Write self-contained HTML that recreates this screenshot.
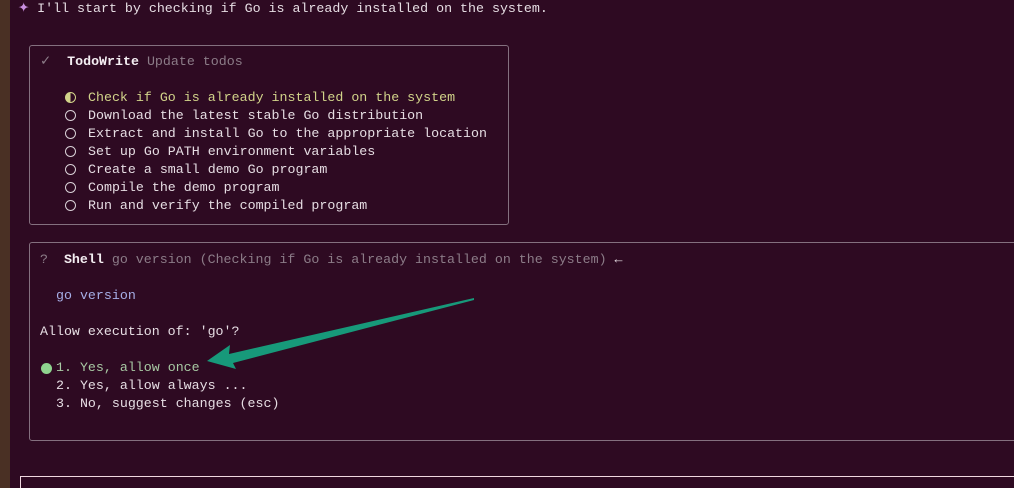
<!DOCTYPE html>
<html><head><meta charset="utf-8"><style>
html,body{margin:0;padding:0;}
body{width:1014px;height:488px;overflow:hidden;background:#2e0a22;position:relative;font-family:"Liberation Mono",monospace;font-size:13.3px;color:#e6dde3;}
.strip{position:absolute;left:0;top:0;width:10px;height:488px;background:#4a3024;}
.t{position:absolute;white-space:pre;line-height:18px;}
.box{position:absolute;border:1px solid #84707f;border-radius:3px;box-sizing:border-box;}
.g{color:#8c7c88;}
.b{font-weight:bold;color:#f4eef2;}
.y{color:#d2d48a;}
.bl{color:#a6aee6;}
.gr{color:#a8c9a4;}
.c{position:absolute;left:65px;width:9px;height:9px;border:1px solid #d8d0d6;border-radius:50%;}
</style></head><body>
<div class="strip"></div>
<div class="t" style="left:18px;top:0px;"><span style="color:#c98ee0">✦</span> I'll start by checking if Go is already installed on the system.</div>
<div class="box" style="left:29px;top:45px;width:480px;height:180px;"></div>
<div class="t" style="left:40px;top:53px;"><span class="g">✓</span>  <span class="b">TodoWrite</span> <span class="g">Update todos</span></div>
<div class="c" style="top:92px;border-color:#d2d48a;background:linear-gradient(90deg,#d2d48a 50%,transparent 50%);"></div>
<div class="c" style="top:110px;"></div>
<div class="c" style="top:128px;"></div>
<div class="c" style="top:146px;"></div>
<div class="c" style="top:164px;"></div>
<div class="c" style="top:182px;"></div>
<div class="c" style="top:200px;"></div>
<div class="t" style="left:88px;top:89px;"><span class="y">Check if Go is already installed on the system</span>
Download the latest stable Go distribution
Extract and install Go to the appropriate location
Set up Go PATH environment variables
Create a small demo Go program
Compile the demo program
Run and verify the compiled program</div>
<div class="box" style="left:29px;top:242px;width:1000px;height:199px;"></div>
<div class="t" style="left:40px;top:251px;"><span class="g">?</span>  <span class="b">Shell</span> <span class="g">go version (Checking if Go is already installed on the system)</span> ←</div>
<div class="t bl" style="left:56px;top:287px;">go version</div>
<div class="t" style="left:40px;top:323px;">Allow execution of: 'go'?</div>
<div style="position:absolute;left:41px;top:363px;width:11px;height:11px;border-radius:50%;background:#8fd48f;"></div>
<div class="t" style="left:56px;top:359px;"><span class="gr">1. Yes, allow once</span>
2. Yes, allow always ...
3. No, suggest changes (esc)</div>
<div style="position:absolute;left:20px;top:476px;width:1000px;height:12px;border-top:1px solid #f0d8e0;border-left:1px solid #f0d8e0;box-sizing:border-box;"></div>
<svg style="position:absolute;left:0;top:0" width="1014" height="488"><polygon points="207,361 230,345 229,354 474,298 474,300 233,363 236,369" fill="#17997a"/></svg>
</body></html>
